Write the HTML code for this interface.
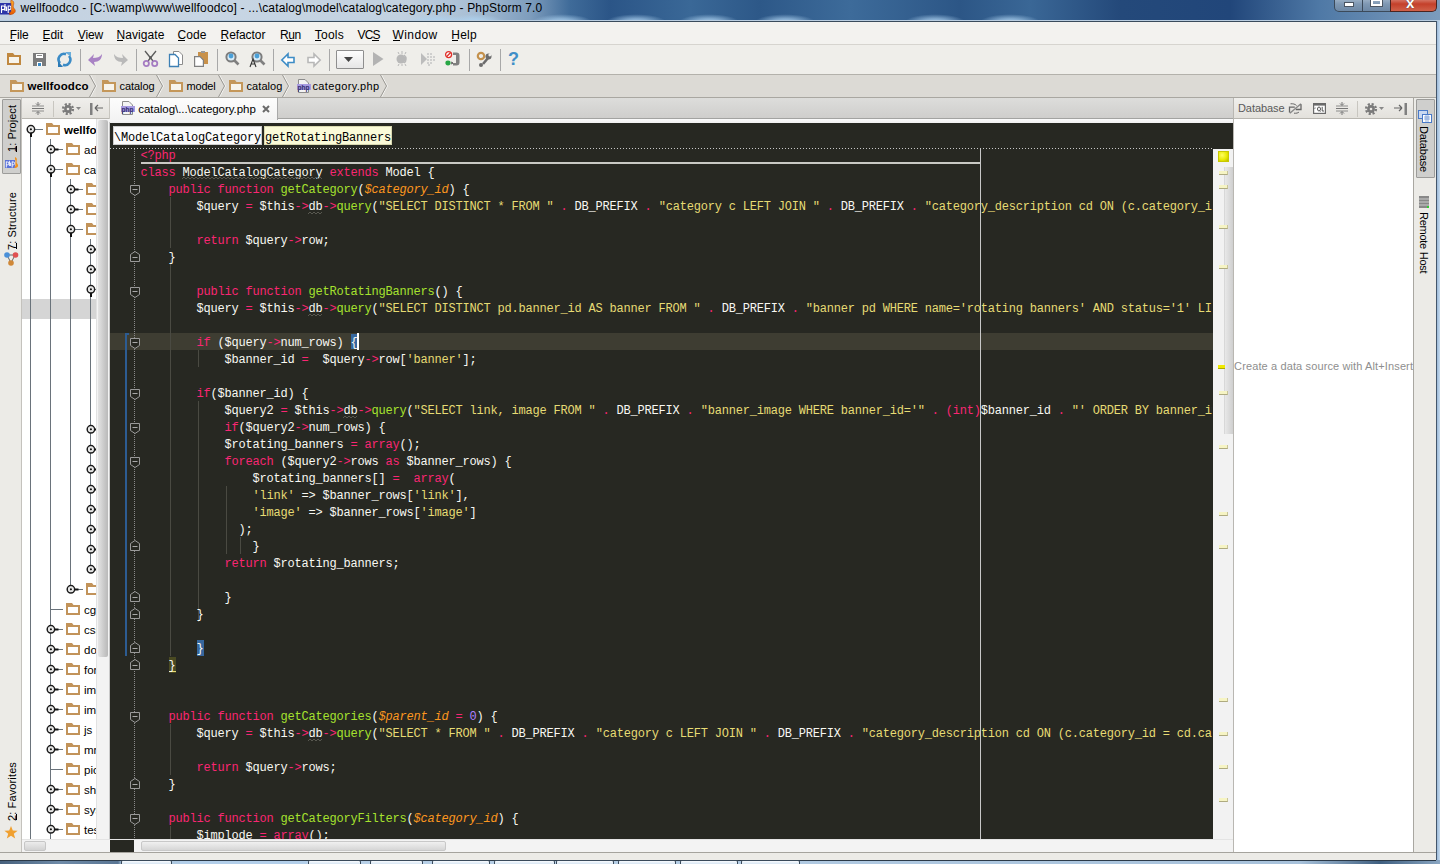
<!DOCTYPE html><html><head><meta charset="utf-8"><style>
*{margin:0;padding:0;box-sizing:border-box}
html,body{width:1440px;height:864px;overflow:hidden;background:#ecebe7;font-family:"Liberation Sans",sans-serif}
.a{position:absolute}
svg.a{overflow:visible}
.t12{font-size:12px;white-space:nowrap;color:#000;line-height:14px}
.code{font-family:"Liberation Mono",monospace;font-size:12px;letter-spacing:-0.2px;line-height:17px;white-space:pre;color:#f8f8f2}
.k{color:#f92672}.f{color:#a6e22e}.s{color:#e6db74}.p{color:#fd971f;font-style:italic}.n{color:#ae81ff}
u{text-decoration:none;border-bottom:1px solid #000}
.vt{transform-origin:0 0;white-space:nowrap;font-size:12px;color:#000;line-height:14px}
</style></head><body><div class="a" style="left:0px;top:0px;width:1440px;height:21px;background:linear-gradient(90deg,#c3d1e0 0px,#c8d6e4 200px,#c2d1e0 400px,#a9bfd5 470px,#7e9dbd 530px,#3f6b99 570px,#2b5587 610px,#3a6897 690px,#2d5888 760px,#3d6b9a 850px,#2c5686 960px,#3a6796 1030px,#24497a 1120px,#21467a 1230px,#4f79a6 1320px,#7c9cbd 1440px)"></div>
<div class="a" style="left:406px;top:9px;width:60px;height:13px;background:radial-gradient(ellipse 50% 60% at 50% 100%,rgba(175,212,242,0.95) 0%,rgba(175,212,242,0.6) 45%,rgba(175,212,242,0) 100%)"></div>
<div class="a" style="left:445px;top:9px;width:60px;height:13px;background:radial-gradient(ellipse 50% 60% at 50% 100%,rgba(175,212,242,0.95) 0%,rgba(175,212,242,0.6) 45%,rgba(175,212,242,0) 100%)"></div>
<div class="a" style="left:532px;top:9px;width:60px;height:13px;background:radial-gradient(ellipse 50% 60% at 50% 100%,rgba(175,212,242,0.95) 0%,rgba(175,212,242,0.6) 45%,rgba(175,212,242,0) 100%)"></div>
<div class="a" style="left:606px;top:9px;width:60px;height:13px;background:radial-gradient(ellipse 50% 60% at 50% 100%,rgba(175,212,242,0.95) 0%,rgba(175,212,242,0.6) 45%,rgba(175,212,242,0) 100%)"></div>
<div class="a" style="left:679px;top:9px;width:60px;height:13px;background:radial-gradient(ellipse 50% 60% at 50% 100%,rgba(175,212,242,0.95) 0%,rgba(175,212,242,0.6) 45%,rgba(175,212,242,0) 100%)"></div>
<div class="a" style="left:755px;top:9px;width:60px;height:13px;background:radial-gradient(ellipse 50% 60% at 50% 100%,rgba(175,212,242,0.95) 0%,rgba(175,212,242,0.6) 45%,rgba(175,212,242,0) 100%)"></div>
<div class="a" style="left:905px;top:9px;width:60px;height:13px;background:radial-gradient(ellipse 50% 60% at 50% 100%,rgba(175,212,242,0.95) 0%,rgba(175,212,242,0.6) 45%,rgba(175,212,242,0) 100%)"></div>
<div class="a" style="left:980px;top:9px;width:60px;height:13px;background:radial-gradient(ellipse 50% 60% at 50% 100%,rgba(175,212,242,0.95) 0%,rgba(175,212,242,0.6) 45%,rgba(175,212,242,0) 100%)"></div>
<div class="a" style="left:0px;top:20px;width:1440px;height:1px;background:#b9cde0"></div>
<div class="a" style="left:0px;top:21px;width:1440px;height:1px;background:#3a4b5c"></div>
<svg class="a" style="left:0px;top:0px;" width="17" height="16" viewBox="0 0 17 16"><defs><linearGradient id="fl" x1="0" y1="0" x2="0" y2="1"><stop offset="0" stop-color="#ffb030"/><stop offset="1" stop-color="#e85800"/></linearGradient></defs><rect x="0" y="3" width="11" height="11.5" fill="#2c35a8"/><path d="M1.5 5.5 V13 M1.5 6 H3.2 A1.6 1.8 0 0 1 3.2 9.6 H1.5 M5 4 V11 M5 7 H6.5 V11 M8.2 5.5 V13 M8.2 6 H9.6 A1.4 1.8 0 0 1 9.6 9.6 H8.2" fill="none" stroke="#fff" stroke-width="1.1"/><path d="M11 0 C17 2,11 6,14.5 9 C16.5 11,15 14.5,9.5 14.6 L9.5 12.6 C12.5 12,11 9.5,11.5 7.5 C12 4.5,10 3,11 0Z" fill="url(#fl)" stroke="#b04000" stroke-width="0.5"/></svg>
<div class="a t12" style="left:20.5px;top:1px;font-size:12px;font-weight:normal;color:#000;letter-spacing:0.157px;">wellfoodco - [C:\wamp\www\wellfoodco] - ...\catalog\model\catalog\category.php - PhpStorm 7.0</div>
<div class="a" style="left:1334px;top:-3px;width:29px;height:15px;border:1px solid #3b4a5a;border-top:none;border-radius:0 0 0 5px;background:linear-gradient(#a9bccf,#7f98b3 50%,#6d88a5)"></div>
<div class="a" style="left:1363px;top:-3px;width:27px;height:15px;border-bottom:1px solid #3b4a5a;background:linear-gradient(#a9bccf,#7f98b3 50%,#6d88a5)"></div>
<div class="a" style="left:1390px;top:-3px;width:47px;height:15px;border:1px solid #4a2420;border-top:none;border-radius:0 0 5px 0;background:linear-gradient(#e0978a,#c4402a 50%,#d0614a)"></div>
<div class="a" style="left:1344px;top:2px;width:10px;height:5px;background:#fff;border:1px solid #4b5562"></div>
<div class="a" style="left:1371px;top:-1px;width:11px;height:7px;border:2px solid #fff;outline:1px solid #4b5562"></div>
<div class="a" style="left:1406px;top:-6px;font:bold 15px 'Liberation Sans';color:#fff;text-shadow:0 0 1px #333">x</div>
<div class="a" style="left:1436px;top:21px;width:4px;height:843px;background:linear-gradient(90deg,#44566b 0 1px,#9cb9d8 1px,#c6dbef)"></div>
<div class="a" style="left:0px;top:22px;width:1436px;height:22px;background:#f3f2ef"></div>
<div class="a" style="left:0px;top:44px;width:1436px;height:1px;background:#d6d4cf"></div>
<div class="a t12" style="left:9.8px;top:28px;font-size:12px;font-weight:normal;color:#000;letter-spacing:-0.161px;">File</div>
<div class="a" style="left:10px;top:40px;width:5px;height:1px;background:#000"></div>
<div class="a t12" style="left:42.5px;top:28px;font-size:12px;font-weight:normal;color:#000;letter-spacing:-0.047px;">Edit</div>
<div class="a" style="left:43px;top:40px;width:5px;height:1px;background:#000"></div>
<div class="a t12" style="left:77.8px;top:28px;font-size:12px;font-weight:normal;color:#000;letter-spacing:-0.149px;">View</div>
<div class="a" style="left:78px;top:40px;width:6px;height:1px;background:#000"></div>
<div class="a t12" style="left:116.5px;top:28px;font-size:12px;font-weight:normal;color:#000;letter-spacing:0.078px;">Navigate</div>
<div class="a" style="left:117px;top:40px;width:6px;height:1px;background:#000"></div>
<div class="a t12" style="left:177.5px;top:28px;font-size:12px;font-weight:normal;color:#000;letter-spacing:0.078px;">Code</div>
<div class="a" style="left:178px;top:40px;width:7px;height:1px;background:#000"></div>
<div class="a t12" style="left:220.6px;top:28px;font-size:12px;font-weight:normal;color:#000;letter-spacing:-0.082px;">Refactor</div>
<div class="a" style="left:221px;top:40px;width:5px;height:1px;background:#000"></div>
<div class="a t12" style="left:280.0px;top:28px;font-size:12px;font-weight:normal;color:#000;letter-spacing:-0.405px;">Run</div>
<div class="a" style="left:287px;top:40px;width:7px;height:1px;background:#000"></div>
<div class="a t12" style="left:314.7px;top:28px;font-size:12px;font-weight:normal;color:#000;letter-spacing:0.277px;">Tools</div>
<div class="a" style="left:315px;top:40px;width:6px;height:1px;background:#000"></div>
<div class="a t12" style="left:357.5px;top:28px;font-size:12px;font-weight:normal;color:#000;letter-spacing:-0.829px;">VCS</div>
<div class="a" style="left:372px;top:40px;width:7px;height:1px;background:#000"></div>
<div class="a t12" style="left:392.5px;top:28px;font-size:12px;font-weight:normal;color:#000;letter-spacing:0.419px;">Window</div>
<div class="a" style="left:393px;top:40px;width:7px;height:1px;background:#000"></div>
<div class="a t12" style="left:451.2px;top:28px;font-size:12px;font-weight:normal;color:#000;letter-spacing:0.278px;">Help</div>
<div class="a" style="left:452px;top:40px;width:6px;height:1px;background:#000"></div>
<div class="a" style="left:0px;top:45px;width:1436px;height:29px;background:#efeeea"></div>
<div class="a" style="left:0px;top:74px;width:1436px;height:1px;background:#b3b1ab"></div>
<div class="a" style="left:80px;top:49px;width:1px;height:22px;background:#a8a8a8"></div>
<div class="a" style="left:136px;top:49px;width:1px;height:22px;background:#a8a8a8"></div>
<div class="a" style="left:217px;top:49px;width:1px;height:22px;background:#a8a8a8"></div>
<div class="a" style="left:273px;top:49px;width:1px;height:22px;background:#a8a8a8"></div>
<div class="a" style="left:329px;top:49px;width:1px;height:22px;background:#a8a8a8"></div>
<div class="a" style="left:469px;top:49px;width:1px;height:22px;background:#a8a8a8"></div>
<div class="a" style="left:500px;top:49px;width:1px;height:22px;background:#a8a8a8"></div>
<svg class="a" style="left:7px;top:53px;" width="14" height="12" viewBox="0 0 14 12"><path d="M0 0 H6 L7.5 2 H14 V12 H0 Z" fill="#c08840"/><rect x="2" y="4" width="10" height="6" fill="#f7f4ec"/></svg>
<svg class="a" style="left:33px;top:53px;" width="13" height="13" viewBox="0 0 13 13"><rect x="0" y="0" width="13" height="13" fill="#7b7b7b"/><rect x="3" y="1" width="7" height="4" fill="#fff"/><rect x="4" y="2" width="5" height="1" fill="#888"/><rect x="4" y="9" width="5" height="4" fill="#fff"/><rect x="5" y="10" width="3" height="3" fill="#3a8ac4"/></svg>
<svg class="a" style="left:57px;top:52px;" width="15" height="15" viewBox="0 0 15 15"><path d="M3 11 A5.5 5.5 0 0 1 9 2.2" fill="none" stroke="#3b8bc6" stroke-width="2.6"/><path d="M12 4 A5.5 5.5 0 0 1 6 12.8" fill="none" stroke="#3b8bc6" stroke-width="2.6"/><path d="M8 0 L14 0 L14 5Z" fill="#6aaedb"/><path d="M1 15 L1 9 L6 15Z" fill="#2c7ab5"/></svg>
<svg class="a" style="left:88px;top:53px;" width="15" height="14" viewBox="0 0 15 14"><path d="M0 7 L6 1 L5 5 C9 5,12 4,14 1 C14 6,11 9,6 9 L7 13Z" fill="#a882c4"/></svg>
<svg class="a" style="left:113px;top:53px;" width="15" height="14" viewBox="0 0 15 14"><path d="M15 7 L9 1 L10 5 C6 5,3 4,1 1 C1 6,4 9,9 9 L8 13Z" fill="#b9b9b9"/></svg>
<svg class="a" style="left:143px;top:51px;" width="15" height="16" viewBox="0 0 15 16"><path d="M2 0 L10 10 M13 0 L5 10" stroke="#5b5b5b" stroke-width="1.3"/><rect x="6.5" y="5.5" width="2" height="2" fill="none" stroke="#5b5b5b" stroke-width="0.8"/><circle cx="3.3" cy="12.5" r="2.6" fill="none" stroke="#a57cc2" stroke-width="1.8"/><circle cx="11.7" cy="12.5" r="2.6" fill="none" stroke="#a57cc2" stroke-width="1.8"/></svg>
<svg class="a" style="left:169px;top:51px;" width="14" height="16" viewBox="0 0 14 16"><path d="M4.5 0.5 H10 L13.5 4 V13.5 H4.5Z" fill="#fff" stroke="#8c8c8c"/><path d="M0.5 3.5 H6 L9.5 7 V15.5 H0.5Z" fill="#fff" stroke="#3d80b5" stroke-width="1.3"/></svg>
<svg class="a" style="left:194px;top:51px;" width="14" height="16" viewBox="0 0 14 16"><rect x="4" y="1" width="10" height="12" fill="#c8914a"/><rect x="7" y="0" width="4" height="2" fill="#999"/><path d="M0.6 5.6 H6 L9.4 9 V15.4 H0.6Z" fill="#fff" stroke="#808080" stroke-width="1.2"/></svg>
<svg class="a" style="left:225px;top:51px;" width="15" height="16" viewBox="0 0 15 16"><circle cx="6" cy="6" r="4.6" fill="#d8ecf8" stroke="#7d7d7d" stroke-width="2"/><circle cx="6" cy="5" r="2.4" fill="#4aa0d8"/><path d="M9 9 L13.5 13.5" stroke="#808080" stroke-width="2.6"/></svg>
<svg class="a" style="left:249px;top:51px;" width="17" height="17" viewBox="0 0 17 17"><circle cx="8" cy="6" r="4.6" fill="#d8ecf8" stroke="#7d7d7d" stroke-width="2"/><circle cx="8" cy="5" r="2.4" fill="#4aa0d8"/><path d="M11 9 L15.5 13.5" stroke="#808080" stroke-width="2.6"/><path d="M1 16 L4 8 L7 16 M2.2 13 H5.8" stroke="#333" stroke-width="1.1" fill="none"/></svg>
<svg class="a" style="left:281px;top:53px;" width="14" height="14" viewBox="0 0 14 14"><path d="M0.8 7 L7 1 V4.5 H13 V9.5 H7 V13Z" fill="#fff" stroke="#3d8cc6" stroke-width="1.6"/></svg>
<svg class="a" style="left:307px;top:53px;" width="14" height="14" viewBox="0 0 14 14"><path d="M13.2 7 L7 1 V4.5 H1 V9.5 H7 V13Z" fill="#fff" stroke="#b8b8b8" stroke-width="1.6"/></svg>
<div class="a" style="left:336px;top:50px;width:28px;height:19px;background:linear-gradient(#fdfdfd,#e6e6e6);border:1px solid #8e8e8e;border-radius:1px"></div>
<svg class="a" style="left:344px;top:57px;" width="10" height="6" viewBox="0 0 10 6"><path d="M0 0 H9 L4.5 5Z" fill="#444"/></svg>
<svg class="a" style="left:373px;top:52px;" width="11" height="14" viewBox="0 0 11 14"><path d="M0 0 L10.5 7 L0 14Z" fill="#b3b3b3"/></svg>
<svg class="a" style="left:395px;top:51px;" width="14" height="15" viewBox="0 0 14 15"><circle cx="6" cy="8" r="4.5" fill="#b8b8b8"/><path d="M9 4 A5 5 0 0 1 9 12" fill="none" stroke="#b8b8b8" stroke-width="1.5"/><path d="M3 1 L4 3 M7 0 V3 M11 1 L10 3 M3 15 L4 13 M7 15 V13 M11 15 L10 13" stroke="#b8b8b8" stroke-width="1"/><rect x="9" y="7" width="2" height="2" fill="#b8b8b8"/></svg>
<svg class="a" style="left:421px;top:52px;" width="14" height="14" viewBox="0 0 14 14"><path d="M0 1 L6 7 L0 13Z" fill="#bcbcbc"/><g fill="#c4c4c4"><circle cx="7" cy="2" r="1"/><circle cx="10" cy="2" r="1"/><circle cx="13" cy="5" r="1"/><circle cx="7" cy="5" r="1"/><circle cx="10" cy="5" r="1"/><circle cx="7" cy="8" r="1"/><circle cx="10" cy="8" r="1"/><circle cx="13" cy="8" r="1"/><circle cx="7" cy="11" r="1"/><circle cx="10" cy="11" r="1"/><circle cx="8" cy="13" r="1"/></g></svg>
<svg class="a" style="left:445px;top:51px;" width="15" height="16" viewBox="0 0 15 16"><circle cx="3.6" cy="3.6" r="3" fill="#fff" stroke="#e0302a" stroke-width="1.3"/><path d="M1.5 5.7 L5.7 1.5" stroke="#e0302a" stroke-width="1.3"/><path d="M8 1.5 H11.5 A3 3 0 0 1 14.5 4.5 V11.5 A3 3 0 0 1 11.5 14.5 H8 V12 H11 V4 H8Z" fill="#808080"/><ellipse cx="3" cy="12" rx="2.6" ry="2.4" fill="#28a745"/><path d="M6 11 L8 12 L6 13" stroke="#555" fill="none"/></svg>
<svg class="a" style="left:477px;top:52px;" width="15" height="15" viewBox="0 0 15 15"><circle cx="4" cy="4" r="3.2" fill="none" stroke="#c4914c" stroke-width="2.2"/><path d="M6 12 L11 6" stroke="#6c6c6c" stroke-width="2.6"/><circle cx="11.5" cy="4.5" r="3" fill="#6c6c6c"/><circle cx="12.8" cy="3" r="1.4" fill="#efeeea"/><circle cx="4" cy="13" r="2" fill="#6c6c6c"/></svg>
<div class="a" style="left:508px;top:49px;font:bold 18px 'Liberation Sans';color:#3f8fc8;line-height:20px">?</div>
<div class="a" style="left:0px;top:75px;width:1436px;height:22px;background:#dcdad5"></div>
<div class="a" style="left:0px;top:97px;width:1436px;height:1px;background:#a9a7a1"></div>
<div class="a" style="left:0px;top:75px;width:96px;height:22px;background:#dfddd8"></div>
<svg class="a" style="left:90px;top:75px;" width="8" height="22" viewBox="0 0 8 22"><path d="M0.5 0 L6.5 11 L0.5 22" fill="none" stroke="#f4f4f2" stroke-width="1"/><path d="M-0.5 0 L5.5 11 L-0.5 22" fill="none" stroke="#9a9893" stroke-width="1"/></svg>
<svg class="a" style="left:157px;top:75px;" width="8" height="22" viewBox="0 0 8 22"><path d="M0.5 0 L6.5 11 L0.5 22" fill="none" stroke="#f4f4f2" stroke-width="1"/><path d="M-0.5 0 L5.5 11 L-0.5 22" fill="none" stroke="#9a9893" stroke-width="1"/></svg>
<svg class="a" style="left:219px;top:75px;" width="8" height="22" viewBox="0 0 8 22"><path d="M0.5 0 L6.5 11 L0.5 22" fill="none" stroke="#f4f4f2" stroke-width="1"/><path d="M-0.5 0 L5.5 11 L-0.5 22" fill="none" stroke="#9a9893" stroke-width="1"/></svg>
<svg class="a" style="left:283px;top:75px;" width="8" height="22" viewBox="0 0 8 22"><path d="M0.5 0 L6.5 11 L0.5 22" fill="none" stroke="#f4f4f2" stroke-width="1"/><path d="M-0.5 0 L5.5 11 L-0.5 22" fill="none" stroke="#9a9893" stroke-width="1"/></svg>
<svg class="a" style="left:381px;top:75px;" width="8" height="22" viewBox="0 0 8 22"><path d="M0.5 0 L6.5 11 L0.5 22" fill="none" stroke="#f4f4f2" stroke-width="1"/><path d="M-0.5 0 L5.5 11 L-0.5 22" fill="none" stroke="#9a9893" stroke-width="1"/></svg>
<svg class="a" style="left:10px;top:80px;" width="14" height="12" viewBox="0 0 14 12"><path d="M0 0 H6 L7.5 2 H14 V12 H0 Z" fill="#c4975a"/><rect x="2" y="4" width="10" height="6" fill="#f7f4ec"/></svg>
<div class="a t12" style="left:27.5px;top:79px;font-size:11.5px;font-weight:bold;color:#000;letter-spacing:0.094px;">wellfoodco</div>
<svg class="a" style="left:102px;top:80px;" width="14" height="12" viewBox="0 0 14 12"><path d="M0 0 H6 L7.5 2 H14 V12 H0 Z" fill="#c4975a"/><rect x="2" y="4" width="10" height="6" fill="#f7f4ec"/></svg>
<div class="a t12" style="left:119.5px;top:79px;font-size:11px;font-weight:normal;color:#000;letter-spacing:-0.069px;">catalog</div>
<svg class="a" style="left:169px;top:80px;" width="14" height="12" viewBox="0 0 14 12"><path d="M0 0 H6 L7.5 2 H14 V12 H0 Z" fill="#c4975a"/><rect x="2" y="4" width="10" height="6" fill="#f7f4ec"/></svg>
<div class="a t12" style="left:186.5px;top:79px;font-size:11px;font-weight:normal;color:#000;letter-spacing:-0.194px;">model</div>
<svg class="a" style="left:229px;top:80px;" width="14" height="12" viewBox="0 0 14 12"><path d="M0 0 H6 L7.5 2 H14 V12 H0 Z" fill="#c4975a"/><rect x="2" y="4" width="10" height="6" fill="#f7f4ec"/></svg>
<div class="a t12" style="left:246.5px;top:79px;font-size:11px;font-weight:normal;color:#000;letter-spacing:0.074px;">catalog</div>
<svg class="a" style="left:297px;top:79px;" width="14" height="14" viewBox="0 0 14 14"><path d="M1.5 0.5 H8 L11.5 4 V13.5 H1.5Z" fill="#f4f4f4" stroke="#8c8c8c"/><rect x="0" y="5" width="14" height="6" fill="#a79be0"/><text x="0.5" y="10.5" font-family="Liberation Sans" font-size="6.5" font-weight="bold" fill="#2c2a6a">php</text></svg>
<div class="a t12" style="left:312.5px;top:79px;font-size:11px;font-weight:normal;color:#000;letter-spacing:0.350px;">category.php</div>
<div class="a" style="left:0px;top:98px;width:22px;height:755px;background:#ecebe7"></div>
<div class="a" style="left:21px;top:98px;width:1px;height:755px;background:#c4c2bd"></div>
<div class="a" style="left:2px;top:99px;width:19px;height:75px;background:#cfcfcd;border:1px solid #9c9c9a;border-radius:1px"></div>
<div class="a t12" style="left:4.5px;top:152.0px;font-size:11px;font-weight:normal;color:#000;letter-spacing:0.053px;transform-origin:0 0;transform:rotate(-90deg);">1: Project</div>
<div class="a" style="left:16px;top:146px;width:1px;height:6px;background:#000"></div>
<svg class="a" style="left:5px;top:157px;" width="14" height="12" viewBox="0 0 14 12"><rect x="0" y="3" width="10" height="8" fill="#5a72d8"/><path d="M1.3 4.5 V10.5 M1.3 5 H2.6 A1.2 1.4 0 0 1 2.6 7.8 H1.3 M4.4 3.8 V9 M4.4 6 H5.6 V9 M7.2 4.5 V10.5 M7.2 5 H8.4 A1.2 1.4 0 0 1 8.4 7.8 H7.2" fill="none" stroke="#fff" stroke-width="0.9"/><path d="M10 0 C14 1.5,10 4.5,12.5 7 C14 9,12.5 11,9.5 11 L9.5 9.5 C11.5 9,10 7,10.5 5.5 C11 3.5,9.5 2,10 0Z" fill="#f0901c"/></svg>
<div class="a t12" style="left:4.5px;top:249.5px;font-size:11px;font-weight:normal;color:#000;letter-spacing:0.095px;transform-origin:0 0;transform:rotate(-90deg);">7: Structure</div>
<div class="a" style="left:16px;top:243px;width:1px;height:6px;background:#000"></div>
<svg class="a" style="left:4px;top:252px;" width="15" height="14" viewBox="0 0 15 14"><path d="M3 3 L7 11 L11 3Z" fill="none" stroke="#666" stroke-width="1"/><circle cx="3" cy="3" r="2.8" fill="#4a90d9"/><circle cx="11.5" cy="3" r="2.8" fill="#e05050"/><circle cx="7" cy="11" r="2.8" fill="#d08838"/></svg>
<div class="a t12" style="left:4.5px;top:820.5px;font-size:11px;font-weight:normal;color:#000;letter-spacing:0.128px;transform-origin:0 0;transform:rotate(-90deg);">2: Favorites</div>
<div class="a" style="left:16px;top:814px;width:1px;height:6px;background:#000"></div>
<svg class="a" style="left:4px;top:826px;" width="14" height="13" viewBox="0 0 14 13"><path d="M7 0 L8.8 4.6 L13.6 4.8 L9.8 7.8 L11.2 12.6 L7 9.8 L2.8 12.6 L4.2 7.8 L0.4 4.8 L5.2 4.6Z" fill="#f0a030"/></svg>
<div class="a" style="left:22px;top:98px;width:88px;height:21px;background:linear-gradient(#f0efec,#e3e1dc)"></div>
<div class="a" style="left:22px;top:118px;width:88px;height:1px;background:#b8b6b0"></div>
<div class="a" style="left:109px;top:98px;width:1px;height:22px;background:#c8c6c0"></div>
<svg class="a" style="left:32px;top:102px;" width="12" height="13" viewBox="0 0 12 13"><path d="M0 6.5 H12" stroke="#777" stroke-width="1"/><path d="M0 4 H12 M0 9 H12" stroke="#777" stroke-width="0.8"/><path d="M6 0 V3 M4 1.5 L6 3.5 L8 1.5 M6 13 V10 M4 11.5 L6 9.5 L8 11.5" stroke="#777" stroke-width="1" fill="none"/></svg>
<div class="a" style="left:53px;top:101px;width:1px;height:16px;background:#c8c6c0"></div>
<svg class="a" style="left:62px;top:103px;" width="12" height="12" viewBox="0 0 12 12"><circle cx="6" cy="6" r="4.9" fill="none" stroke="#7a7a7a" stroke-width="2.4" stroke-dasharray="2.1 1.75"/><circle cx="6" cy="6" r="3.9" fill="#7a7a7a"/><circle cx="6" cy="6" r="1.3" fill="#e9e7e2"/></svg>
<svg class="a" style="left:76px;top:107px;" width="5" height="3" viewBox="0 0 5 3"><path d="M0 0 H5 L2.5 3Z" fill="#888"/></svg>
<svg class="a" style="left:90px;top:103px;" width="13" height="12" viewBox="0 0 13 12"><rect x="0" y="0" width="2.5" height="12" fill="#808080"/><path d="M5 5 H13 M5 5 L8 2 M5 5 L8 8" stroke="#666" stroke-width="1.2" fill="none"/></svg>
<div class="a" style="left:22px;top:119px;width:74px;height:720px;background:#fff"></div>
<div class="a" style="left:96px;top:119px;width:14px;height:720px;background:#f3f3f3;border-left:1px solid #e2e2e2"></div>
<div class="a" style="left:98px;top:120px;width:10px;height:537px;background:linear-gradient(90deg,#e4e4e4,#c9c9c9 60%,#b9b9b9);border-radius:2px"></div>
<div class="a" style="left:22px;top:299px;width:74px;height:20px;background:#d5d5d5"></div>
<div class="a" style="left:30px;top:133px;width:1px;height:706px;background:#6a737b"></div>
<div class="a" style="left:50px;top:139px;width:1px;height:700px;background:#6a737b"></div>
<div class="a" style="left:70px;top:179px;width:1px;height:410px;background:#6a737b"></div>
<div class="a" style="left:90px;top:239px;width:1px;height:330px;background:#6a737b"></div>
<svg class="a" style="left:22px;top:119px;overflow:hidden" width="74" height="720"><rect x="13" y="10" width="8" height="1" fill="#6a737b"/><circle cx="8.9" cy="10.3" r="3.7" fill="#fff" stroke="#1c1c1c" stroke-width="1.5"/><circle cx="8.9" cy="10.3" r="2.2" fill="none" stroke="#d0d0d0" stroke-width="0.8"/><circle cx="8.9" cy="10.3" r="1.1" fill="#111"/><rect x="8" y="14" width="2" height="4" fill="#111"/><rect x="33" y="30" width="8" height="1" fill="#6a737b"/><circle cx="28.9" cy="30.3" r="3.7" fill="#fff" stroke="#1c1c1c" stroke-width="1.5"/><circle cx="28.9" cy="30.3" r="2.2" fill="none" stroke="#d0d0d0" stroke-width="0.8"/><circle cx="28.9" cy="30.3" r="1.1" fill="#111"/><rect x="32.5" y="29.5" width="4" height="2" fill="#111"/><rect x="33" y="50" width="8" height="1" fill="#6a737b"/><circle cx="28.9" cy="50.3" r="3.7" fill="#fff" stroke="#1c1c1c" stroke-width="1.5"/><circle cx="28.9" cy="50.3" r="2.2" fill="none" stroke="#d0d0d0" stroke-width="0.8"/><circle cx="28.9" cy="50.3" r="1.1" fill="#111"/><rect x="28" y="54" width="2" height="4" fill="#111"/><rect x="53" y="70" width="8" height="1" fill="#6a737b"/><circle cx="48.9" cy="70.3" r="3.7" fill="#fff" stroke="#1c1c1c" stroke-width="1.5"/><circle cx="48.9" cy="70.3" r="2.2" fill="none" stroke="#d0d0d0" stroke-width="0.8"/><circle cx="48.9" cy="70.3" r="1.1" fill="#111"/><rect x="52.5" y="69.5" width="4" height="2" fill="#111"/><rect x="53" y="90" width="8" height="1" fill="#6a737b"/><circle cx="48.9" cy="90.3" r="3.7" fill="#fff" stroke="#1c1c1c" stroke-width="1.5"/><circle cx="48.9" cy="90.3" r="2.2" fill="none" stroke="#d0d0d0" stroke-width="0.8"/><circle cx="48.9" cy="90.3" r="1.1" fill="#111"/><rect x="52.5" y="89.5" width="4" height="2" fill="#111"/><rect x="53" y="110" width="8" height="1" fill="#6a737b"/><circle cx="48.9" cy="110.3" r="3.7" fill="#fff" stroke="#1c1c1c" stroke-width="1.5"/><circle cx="48.9" cy="110.3" r="2.2" fill="none" stroke="#d0d0d0" stroke-width="0.8"/><circle cx="48.9" cy="110.3" r="1.1" fill="#111"/><rect x="48" y="114" width="2" height="4" fill="#111"/><rect x="73" y="130" width="8" height="1" fill="#6a737b"/><circle cx="68.9" cy="130.3" r="3.7" fill="#fff" stroke="#1c1c1c" stroke-width="1.5"/><circle cx="68.9" cy="130.3" r="2.2" fill="none" stroke="#d0d0d0" stroke-width="0.8"/><circle cx="68.9" cy="130.3" r="1.1" fill="#111"/><rect x="72.5" y="129.5" width="4" height="2" fill="#111"/><rect x="73" y="150" width="8" height="1" fill="#6a737b"/><circle cx="68.9" cy="150.3" r="3.7" fill="#fff" stroke="#1c1c1c" stroke-width="1.5"/><circle cx="68.9" cy="150.3" r="2.2" fill="none" stroke="#d0d0d0" stroke-width="0.8"/><circle cx="68.9" cy="150.3" r="1.1" fill="#111"/><rect x="72.5" y="149.5" width="4" height="2" fill="#111"/><rect x="73" y="170" width="8" height="1" fill="#6a737b"/><circle cx="68.9" cy="170.3" r="3.7" fill="#fff" stroke="#1c1c1c" stroke-width="1.5"/><circle cx="68.9" cy="170.3" r="2.2" fill="none" stroke="#d0d0d0" stroke-width="0.8"/><circle cx="68.9" cy="170.3" r="1.1" fill="#111"/><rect x="68" y="174" width="2" height="4" fill="#111"/><rect x="73" y="310" width="8" height="1" fill="#6a737b"/><circle cx="68.9" cy="310.3" r="3.7" fill="#fff" stroke="#1c1c1c" stroke-width="1.5"/><circle cx="68.9" cy="310.3" r="2.2" fill="none" stroke="#d0d0d0" stroke-width="0.8"/><circle cx="68.9" cy="310.3" r="1.1" fill="#111"/><rect x="72.5" y="309.5" width="4" height="2" fill="#111"/><rect x="73" y="330" width="8" height="1" fill="#6a737b"/><circle cx="68.9" cy="330.3" r="3.7" fill="#fff" stroke="#1c1c1c" stroke-width="1.5"/><circle cx="68.9" cy="330.3" r="2.2" fill="none" stroke="#d0d0d0" stroke-width="0.8"/><circle cx="68.9" cy="330.3" r="1.1" fill="#111"/><rect x="72.5" y="329.5" width="4" height="2" fill="#111"/><rect x="73" y="350" width="8" height="1" fill="#6a737b"/><circle cx="68.9" cy="350.3" r="3.7" fill="#fff" stroke="#1c1c1c" stroke-width="1.5"/><circle cx="68.9" cy="350.3" r="2.2" fill="none" stroke="#d0d0d0" stroke-width="0.8"/><circle cx="68.9" cy="350.3" r="1.1" fill="#111"/><rect x="72.5" y="349.5" width="4" height="2" fill="#111"/><rect x="73" y="370" width="8" height="1" fill="#6a737b"/><circle cx="68.9" cy="370.3" r="3.7" fill="#fff" stroke="#1c1c1c" stroke-width="1.5"/><circle cx="68.9" cy="370.3" r="2.2" fill="none" stroke="#d0d0d0" stroke-width="0.8"/><circle cx="68.9" cy="370.3" r="1.1" fill="#111"/><rect x="72.5" y="369.5" width="4" height="2" fill="#111"/><rect x="73" y="390" width="8" height="1" fill="#6a737b"/><circle cx="68.9" cy="390.3" r="3.7" fill="#fff" stroke="#1c1c1c" stroke-width="1.5"/><circle cx="68.9" cy="390.3" r="2.2" fill="none" stroke="#d0d0d0" stroke-width="0.8"/><circle cx="68.9" cy="390.3" r="1.1" fill="#111"/><rect x="72.5" y="389.5" width="4" height="2" fill="#111"/><rect x="73" y="410" width="8" height="1" fill="#6a737b"/><circle cx="68.9" cy="410.3" r="3.7" fill="#fff" stroke="#1c1c1c" stroke-width="1.5"/><circle cx="68.9" cy="410.3" r="2.2" fill="none" stroke="#d0d0d0" stroke-width="0.8"/><circle cx="68.9" cy="410.3" r="1.1" fill="#111"/><rect x="72.5" y="409.5" width="4" height="2" fill="#111"/><rect x="73" y="430" width="8" height="1" fill="#6a737b"/><circle cx="68.9" cy="430.3" r="3.7" fill="#fff" stroke="#1c1c1c" stroke-width="1.5"/><circle cx="68.9" cy="430.3" r="2.2" fill="none" stroke="#d0d0d0" stroke-width="0.8"/><circle cx="68.9" cy="430.3" r="1.1" fill="#111"/><rect x="72.5" y="429.5" width="4" height="2" fill="#111"/><rect x="73" y="450" width="8" height="1" fill="#6a737b"/><circle cx="68.9" cy="450.3" r="3.7" fill="#fff" stroke="#1c1c1c" stroke-width="1.5"/><circle cx="68.9" cy="450.3" r="2.2" fill="none" stroke="#d0d0d0" stroke-width="0.8"/><circle cx="68.9" cy="450.3" r="1.1" fill="#111"/><rect x="72.5" y="449.5" width="4" height="2" fill="#111"/><rect x="53" y="470" width="8" height="1" fill="#6a737b"/><circle cx="48.9" cy="470.3" r="3.7" fill="#fff" stroke="#1c1c1c" stroke-width="1.5"/><circle cx="48.9" cy="470.3" r="2.2" fill="none" stroke="#d0d0d0" stroke-width="0.8"/><circle cx="48.9" cy="470.3" r="1.1" fill="#111"/><rect x="52.5" y="469.5" width="4" height="2" fill="#111"/><rect x="28" y="490" width="13" height="1" fill="#6a737b"/><rect x="33" y="510" width="8" height="1" fill="#6a737b"/><circle cx="28.9" cy="510.3" r="3.7" fill="#fff" stroke="#1c1c1c" stroke-width="1.5"/><circle cx="28.9" cy="510.3" r="2.2" fill="none" stroke="#d0d0d0" stroke-width="0.8"/><circle cx="28.9" cy="510.3" r="1.1" fill="#111"/><rect x="32.5" y="509.5" width="4" height="2" fill="#111"/><rect x="33" y="530" width="8" height="1" fill="#6a737b"/><circle cx="28.9" cy="530.3" r="3.7" fill="#fff" stroke="#1c1c1c" stroke-width="1.5"/><circle cx="28.9" cy="530.3" r="2.2" fill="none" stroke="#d0d0d0" stroke-width="0.8"/><circle cx="28.9" cy="530.3" r="1.1" fill="#111"/><rect x="32.5" y="529.5" width="4" height="2" fill="#111"/><rect x="33" y="550" width="8" height="1" fill="#6a737b"/><circle cx="28.9" cy="550.3" r="3.7" fill="#fff" stroke="#1c1c1c" stroke-width="1.5"/><circle cx="28.9" cy="550.3" r="2.2" fill="none" stroke="#d0d0d0" stroke-width="0.8"/><circle cx="28.9" cy="550.3" r="1.1" fill="#111"/><rect x="32.5" y="549.5" width="4" height="2" fill="#111"/><rect x="33" y="570" width="8" height="1" fill="#6a737b"/><circle cx="28.9" cy="570.3" r="3.7" fill="#fff" stroke="#1c1c1c" stroke-width="1.5"/><circle cx="28.9" cy="570.3" r="2.2" fill="none" stroke="#d0d0d0" stroke-width="0.8"/><circle cx="28.9" cy="570.3" r="1.1" fill="#111"/><rect x="32.5" y="569.5" width="4" height="2" fill="#111"/><rect x="33" y="590" width="8" height="1" fill="#6a737b"/><circle cx="28.9" cy="590.3" r="3.7" fill="#fff" stroke="#1c1c1c" stroke-width="1.5"/><circle cx="28.9" cy="590.3" r="2.2" fill="none" stroke="#d0d0d0" stroke-width="0.8"/><circle cx="28.9" cy="590.3" r="1.1" fill="#111"/><rect x="32.5" y="589.5" width="4" height="2" fill="#111"/><rect x="33" y="610" width="8" height="1" fill="#6a737b"/><circle cx="28.9" cy="610.3" r="3.7" fill="#fff" stroke="#1c1c1c" stroke-width="1.5"/><circle cx="28.9" cy="610.3" r="2.2" fill="none" stroke="#d0d0d0" stroke-width="0.8"/><circle cx="28.9" cy="610.3" r="1.1" fill="#111"/><rect x="32.5" y="609.5" width="4" height="2" fill="#111"/><rect x="33" y="630" width="8" height="1" fill="#6a737b"/><circle cx="28.9" cy="630.3" r="3.7" fill="#fff" stroke="#1c1c1c" stroke-width="1.5"/><circle cx="28.9" cy="630.3" r="2.2" fill="none" stroke="#d0d0d0" stroke-width="0.8"/><circle cx="28.9" cy="630.3" r="1.1" fill="#111"/><rect x="32.5" y="629.5" width="4" height="2" fill="#111"/><rect x="28" y="650" width="13" height="1" fill="#6a737b"/><rect x="33" y="670" width="8" height="1" fill="#6a737b"/><circle cx="28.9" cy="670.3" r="3.7" fill="#fff" stroke="#1c1c1c" stroke-width="1.5"/><circle cx="28.9" cy="670.3" r="2.2" fill="none" stroke="#d0d0d0" stroke-width="0.8"/><circle cx="28.9" cy="670.3" r="1.1" fill="#111"/><rect x="32.5" y="669.5" width="4" height="2" fill="#111"/><rect x="33" y="690" width="8" height="1" fill="#6a737b"/><circle cx="28.9" cy="690.3" r="3.7" fill="#fff" stroke="#1c1c1c" stroke-width="1.5"/><circle cx="28.9" cy="690.3" r="2.2" fill="none" stroke="#d0d0d0" stroke-width="0.8"/><circle cx="28.9" cy="690.3" r="1.1" fill="#111"/><rect x="32.5" y="689.5" width="4" height="2" fill="#111"/><rect x="33" y="710" width="8" height="1" fill="#6a737b"/><circle cx="28.9" cy="710.3" r="3.7" fill="#fff" stroke="#1c1c1c" stroke-width="1.5"/><circle cx="28.9" cy="710.3" r="2.2" fill="none" stroke="#d0d0d0" stroke-width="0.8"/><circle cx="28.9" cy="710.3" r="1.1" fill="#111"/><rect x="32.5" y="709.5" width="4" height="2" fill="#111"/></svg>
<div class="a" style="left:22px;top:119px;width:74px;height:720px;overflow:hidden"><svg class="a" style="left:24px;top:4px" width="14" height="12"><path d="M0 0 H6 L7.5 2 H14 V12 H0 Z" fill="#c2935a"/><rect x="2" y="4" width="10" height="6" fill="#fff"/></svg><div class="a t12" style="left:42px;top:4px;font-size:11.5px;font-weight:bold">wellfoodco</div><svg class="a" style="left:44px;top:24px" width="14" height="12"><path d="M0 0 H6 L7.5 2 H14 V12 H0 Z" fill="#c2935a"/><rect x="2" y="4" width="10" height="6" fill="#fff"/></svg><div class="a t12" style="left:62px;top:24px;font-size:11.5px;">admin</div><svg class="a" style="left:44px;top:44px" width="14" height="12"><path d="M0 0 H6 L7.5 2 H14 V12 H0 Z" fill="#c2935a"/><rect x="2" y="4" width="10" height="6" fill="#fff"/></svg><div class="a t12" style="left:62px;top:44px;font-size:11.5px;">catalog</div><svg class="a" style="left:64px;top:64px" width="14" height="12"><path d="M0 0 H6 L7.5 2 H14 V12 H0 Z" fill="#c2935a"/><rect x="2" y="4" width="10" height="6" fill="#fff"/></svg><div class="a t12" style="left:82px;top:64px;font-size:11.5px;">c</div><svg class="a" style="left:64px;top:84px" width="14" height="12"><path d="M0 0 H6 L7.5 2 H14 V12 H0 Z" fill="#c2935a"/><rect x="2" y="4" width="10" height="6" fill="#fff"/></svg><div class="a t12" style="left:82px;top:84px;font-size:11.5px;">c</div><svg class="a" style="left:64px;top:104px" width="14" height="12"><path d="M0 0 H6 L7.5 2 H14 V12 H0 Z" fill="#c2935a"/><rect x="2" y="4" width="10" height="6" fill="#fff"/></svg><div class="a t12" style="left:82px;top:104px;font-size:11.5px;">c</div><svg class="a" style="left:64px;top:464px" width="14" height="12"><path d="M0 0 H6 L7.5 2 H14 V12 H0 Z" fill="#c2935a"/><rect x="2" y="4" width="10" height="6" fill="#fff"/></svg><div class="a t12" style="left:82px;top:464px;font-size:11.5px;">c</div><svg class="a" style="left:44px;top:484px" width="14" height="12"><path d="M0 0 H6 L7.5 2 H14 V12 H0 Z" fill="#c2935a"/><rect x="2" y="4" width="10" height="6" fill="#fff"/></svg><div class="a t12" style="left:62px;top:484px;font-size:11.5px;">cgi-bin</div><svg class="a" style="left:44px;top:504px" width="14" height="12"><path d="M0 0 H6 L7.5 2 H14 V12 H0 Z" fill="#c2935a"/><rect x="2" y="4" width="10" height="6" fill="#fff"/></svg><div class="a t12" style="left:62px;top:504px;font-size:11.5px;">css</div><svg class="a" style="left:44px;top:524px" width="14" height="12"><path d="M0 0 H6 L7.5 2 H14 V12 H0 Z" fill="#c2935a"/><rect x="2" y="4" width="10" height="6" fill="#fff"/></svg><div class="a t12" style="left:62px;top:524px;font-size:11.5px;">doc</div><svg class="a" style="left:44px;top:544px" width="14" height="12"><path d="M0 0 H6 L7.5 2 H14 V12 H0 Z" fill="#c2935a"/><rect x="2" y="4" width="10" height="6" fill="#fff"/></svg><div class="a t12" style="left:62px;top:544px;font-size:11.5px;">fonts</div><svg class="a" style="left:44px;top:564px" width="14" height="12"><path d="M0 0 H6 L7.5 2 H14 V12 H0 Z" fill="#c2935a"/><rect x="2" y="4" width="10" height="6" fill="#fff"/></svg><div class="a t12" style="left:62px;top:564px;font-size:11.5px;">image</div><svg class="a" style="left:44px;top:584px" width="14" height="12"><path d="M0 0 H6 L7.5 2 H14 V12 H0 Z" fill="#c2935a"/><rect x="2" y="4" width="10" height="6" fill="#fff"/></svg><div class="a t12" style="left:62px;top:584px;font-size:11.5px;">img</div><svg class="a" style="left:44px;top:604px" width="14" height="12"><path d="M0 0 H6 L7.5 2 H14 V12 H0 Z" fill="#c2935a"/><rect x="2" y="4" width="10" height="6" fill="#fff"/></svg><div class="a t12" style="left:62px;top:604px;font-size:11.5px;">js</div><svg class="a" style="left:44px;top:624px" width="14" height="12"><path d="M0 0 H6 L7.5 2 H14 V12 H0 Z" fill="#c2935a"/><rect x="2" y="4" width="10" height="6" fill="#fff"/></svg><div class="a t12" style="left:62px;top:624px;font-size:11.5px;">mrvn</div><svg class="a" style="left:44px;top:644px" width="14" height="12"><path d="M0 0 H6 L7.5 2 H14 V12 H0 Z" fill="#c2935a"/><rect x="2" y="4" width="10" height="6" fill="#fff"/></svg><div class="a t12" style="left:62px;top:644px;font-size:11.5px;">pics</div><svg class="a" style="left:44px;top:664px" width="14" height="12"><path d="M0 0 H6 L7.5 2 H14 V12 H0 Z" fill="#c2935a"/><rect x="2" y="4" width="10" height="6" fill="#fff"/></svg><div class="a t12" style="left:62px;top:664px;font-size:11.5px;">shop</div><svg class="a" style="left:44px;top:684px" width="14" height="12"><path d="M0 0 H6 L7.5 2 H14 V12 H0 Z" fill="#c2935a"/><rect x="2" y="4" width="10" height="6" fill="#fff"/></svg><div class="a t12" style="left:62px;top:684px;font-size:11.5px;">system</div><svg class="a" style="left:44px;top:704px" width="14" height="12"><path d="M0 0 H6 L7.5 2 H14 V12 H0 Z" fill="#c2935a"/><rect x="2" y="4" width="10" height="6" fill="#fff"/></svg><div class="a t12" style="left:62px;top:704px;font-size:11.5px;">test</div></div>
<div class="a" style="left:22px;top:839px;width:88px;height:13px;background:#f3f3f3;border-top:1px solid #e4e4e4"></div>
<div class="a" style="left:24px;top:841px;width:22px;height:10px;background:linear-gradient(#ececec,#d2d2d2);border:1px solid #c6c6c6;border-radius:2px"></div>
<div class="a" style="left:110px;top:98px;width:1123px;height:20px;background:linear-gradient(#dddddb,#cfcecc)"></div>
<div class="a" style="left:110px;top:118px;width:1123px;height:1px;background:#a3a3a1"></div>
<div class="a" style="left:110px;top:119px;width:1123px;height:4px;background:linear-gradient(#fafafa,#f0f0f0)"></div>
<div class="a" style="left:110px;top:98px;width:168px;height:22px;background:linear-gradient(#fdfdfd,#f3f3f3);border-right:1px solid #a9a9a9"></div>
<svg class="a" style="left:121px;top:101px;" width="14" height="14" viewBox="0 0 14 14"><path d="M1.5 0.5 H8 L11.5 4 V13.5 H1.5Z" fill="#f4f4f4" stroke="#8c8c8c"/><rect x="0" y="5" width="14" height="6" fill="#a79be0"/><text x="0.5" y="10.5" font-family="Liberation Sans" font-size="6.5" font-weight="bold" fill="#2c2a6a">php</text></svg>
<div class="a t12" style="left:138.25px;top:102px;font-size:11.5px;font-weight:normal;color:#000;letter-spacing:-0.050px;">catalog\...\category.php</div>
<svg class="a" style="left:262px;top:105px;" width="8" height="8" viewBox="0 0 8 8"><path d="M1 1 L7 7 M7 1 L1 7" stroke="#6a6a6a" stroke-width="2"/></svg>
<div class="a" style="left:109px;top:122px;width:1px;height:717px;background:#c9c9c9"></div>
<div class="a" style="left:110px;top:123px;width:1123px;height:716px;background:#272822"></div>
<div class="a" style="left:113px;top:126px;width:149px;height:19px;background:#fbfbfb;border:1px solid #cfcfcf"></div>
<div class="a" style="left:264px;top:126px;width:128px;height:19px;background:#fafad8;border:1px solid #d8d8b0"></div>
<div class="a code" style="left:114px;top:130px;color:#000;line-height:17px">\ModelCatalogCategory</div>
<div class="a code" style="left:265px;top:130px;color:#000;line-height:17px">getRotatingBanners</div>
<div class="a" style="left:110px;top:148px;width:1103px;height:1px;background:repeating-linear-gradient(90deg,#c8c8c8 0 1px,transparent 1px 3px)"></div>
<div class="a" style="left:110px;top:333px;width:1103px;height:17px;background:#3e3d32"></div>
<div class="a" style="left:134px;top:149px;width:1px;height:690px;background:repeating-linear-gradient(#8a8a8a 0 1px,transparent 1px 2px)"></div>
<div class="a" style="left:125px;top:333px;width:2px;height:323px;background:#2d5c92"></div>
<div class="a" style="left:125px;top:333px;width:4px;height:2px;background:#2d5c92"></div>
<div class="a" style="left:141px;top:162px;width:839px;height:2px;background:#c9c9c4"></div>
<div class="a" style="left:980px;top:148px;width:1px;height:691px;background:#c8c8c8"></div>
<div class="a" style="left:170px;top:197px;width:1px;height:51px;background:#4a4a42"></div>
<div class="a" style="left:170px;top:260px;width:1px;height:396px;background:#4a4a42"></div>
<div class="a" style="left:170px;top:724px;width:1px;height:51px;background:#4a4a42"></div>
<div class="a" style="left:170px;top:826px;width:1px;height:13px;background:#4a4a42"></div>
<div class="a" style="left:198px;top:350px;width:1px;height:17px;background:#4a4a42"></div>
<div class="a" style="left:198px;top:401px;width:1px;height:221px;background:#4a4a42"></div>
<div class="a" style="left:226px;top:486px;width:1px;height:68px;background:#4a4a42"></div>
<div class="a" style="left:240px;top:537px;width:1px;height:17px;background:#4a4a42"></div>
<svg class="a" style="left:130px;top:183px;" width="10" height="13" viewBox="0 0 10 13"><path d="M0.5 2.5 H9.5 V9.5 L5 12.5 L0.5 9.5 Z" fill="#272822" stroke="#9a9a9a" stroke-width="1"/><path d="M2.5 6.5 H7.5" stroke="#a8a8a8" stroke-width="1"/></svg>
<svg class="a" style="left:130px;top:285px;" width="10" height="13" viewBox="0 0 10 13"><path d="M0.5 2.5 H9.5 V9.5 L5 12.5 L0.5 9.5 Z" fill="#272822" stroke="#9a9a9a" stroke-width="1"/><path d="M2.5 6.5 H7.5" stroke="#a8a8a8" stroke-width="1"/></svg>
<svg class="a" style="left:130px;top:336px;" width="10" height="13" viewBox="0 0 10 13"><path d="M0.5 2.5 H9.5 V9.5 L5 12.5 L0.5 9.5 Z" fill="#272822" stroke="#9a9a9a" stroke-width="1"/><path d="M2.5 6.5 H7.5" stroke="#a8a8a8" stroke-width="1"/></svg>
<svg class="a" style="left:130px;top:387px;" width="10" height="13" viewBox="0 0 10 13"><path d="M0.5 2.5 H9.5 V9.5 L5 12.5 L0.5 9.5 Z" fill="#272822" stroke="#9a9a9a" stroke-width="1"/><path d="M2.5 6.5 H7.5" stroke="#a8a8a8" stroke-width="1"/></svg>
<svg class="a" style="left:130px;top:421px;" width="10" height="13" viewBox="0 0 10 13"><path d="M0.5 2.5 H9.5 V9.5 L5 12.5 L0.5 9.5 Z" fill="#272822" stroke="#9a9a9a" stroke-width="1"/><path d="M2.5 6.5 H7.5" stroke="#a8a8a8" stroke-width="1"/></svg>
<svg class="a" style="left:130px;top:455px;" width="10" height="13" viewBox="0 0 10 13"><path d="M0.5 2.5 H9.5 V9.5 L5 12.5 L0.5 9.5 Z" fill="#272822" stroke="#9a9a9a" stroke-width="1"/><path d="M2.5 6.5 H7.5" stroke="#a8a8a8" stroke-width="1"/></svg>
<svg class="a" style="left:130px;top:710px;" width="10" height="13" viewBox="0 0 10 13"><path d="M0.5 2.5 H9.5 V9.5 L5 12.5 L0.5 9.5 Z" fill="#272822" stroke="#9a9a9a" stroke-width="1"/><path d="M2.5 6.5 H7.5" stroke="#a8a8a8" stroke-width="1"/></svg>
<svg class="a" style="left:130px;top:812px;" width="10" height="13" viewBox="0 0 10 13"><path d="M0.5 2.5 H9.5 V9.5 L5 12.5 L0.5 9.5 Z" fill="#272822" stroke="#9a9a9a" stroke-width="1"/><path d="M2.5 6.5 H7.5" stroke="#a8a8a8" stroke-width="1"/></svg>
<svg class="a" style="left:130px;top:251px;" width="10" height="13" viewBox="0 0 10 13"><path d="M0.5 10.5 H9.5 V3.5 L5 0.5 L0.5 3.5 Z" fill="#272822" stroke="#9a9a9a" stroke-width="1"/><path d="M2.5 6.5 H7.5" stroke="#a8a8a8" stroke-width="1"/></svg>
<svg class="a" style="left:130px;top:540px;" width="10" height="13" viewBox="0 0 10 13"><path d="M0.5 10.5 H9.5 V3.5 L5 0.5 L0.5 3.5 Z" fill="#272822" stroke="#9a9a9a" stroke-width="1"/><path d="M2.5 6.5 H7.5" stroke="#a8a8a8" stroke-width="1"/></svg>
<svg class="a" style="left:130px;top:591px;" width="10" height="13" viewBox="0 0 10 13"><path d="M0.5 10.5 H9.5 V3.5 L5 0.5 L0.5 3.5 Z" fill="#272822" stroke="#9a9a9a" stroke-width="1"/><path d="M2.5 6.5 H7.5" stroke="#a8a8a8" stroke-width="1"/></svg>
<svg class="a" style="left:130px;top:608px;" width="10" height="13" viewBox="0 0 10 13"><path d="M0.5 10.5 H9.5 V3.5 L5 0.5 L0.5 3.5 Z" fill="#272822" stroke="#9a9a9a" stroke-width="1"/><path d="M2.5 6.5 H7.5" stroke="#a8a8a8" stroke-width="1"/></svg>
<svg class="a" style="left:130px;top:642px;" width="10" height="13" viewBox="0 0 10 13"><path d="M0.5 10.5 H9.5 V3.5 L5 0.5 L0.5 3.5 Z" fill="#272822" stroke="#9a9a9a" stroke-width="1"/><path d="M2.5 6.5 H7.5" stroke="#a8a8a8" stroke-width="1"/></svg>
<svg class="a" style="left:130px;top:659px;" width="10" height="13" viewBox="0 0 10 13"><path d="M0.5 10.5 H9.5 V3.5 L5 0.5 L0.5 3.5 Z" fill="#272822" stroke="#9a9a9a" stroke-width="1"/><path d="M2.5 6.5 H7.5" stroke="#a8a8a8" stroke-width="1"/></svg>
<svg class="a" style="left:130px;top:778px;" width="10" height="13" viewBox="0 0 10 13"><path d="M0.5 10.5 H9.5 V3.5 L5 0.5 L0.5 3.5 Z" fill="#272822" stroke="#9a9a9a" stroke-width="1"/><path d="M2.5 6.5 H7.5" stroke="#a8a8a8" stroke-width="1"/></svg>
<div class="a" style="left:351px;top:334px;width:7px;height:15px;background:#36679e"></div>
<div class="a" style="left:357px;top:333px;width:2px;height:17px;background:#ffffff"></div>
<div class="a" style="left:197px;top:640px;width:7px;height:16px;background:#36679e"></div>
<div class="a" style="left:169px;top:657px;width:7px;height:16px;background:#4a4a22"></div>
<div class="a" style="left:169px;top:671px;width:7px;height:1px;background:#e6db74"></div>
<div class="a code" style="left:140.4px;top:148px;width:1072px;height:691px;overflow:hidden"><span class="k">&lt;?</span><span class="k">php</span>
<span class="k">class</span> ModelCatalogCategory <span class="k">extends</span> Model {
    <span class="k">public</span> <span class="k">function</span> <span class="f">getCategory</span>(<span class="p">$</span><span class="p">category_id</span>) {
        $query <span class="k">=</span> $this<span class="k">-&gt;</span>db<span class="k">-&gt;</span><span class="f">query</span>(<span class="s">"SELECT DISTINCT * FROM "</span> <span class="k">.</span> DB_PREFIX <span class="k">.</span> <span class="s">"category c LEFT JOIN "</span> <span class="k">.</span> DB_PREFIX <span class="k">.</span> <span class="s">"category_description cd ON (c.category_id = cd.category_id)</span>

        <span class="k">return</span> $query<span class="k">-&gt;</span>row;
    }

        <span class="k">public</span> <span class="k">function</span> <span class="f">getRotatingBanners</span>() {
        $query <span class="k">=</span> $this<span class="k">-&gt;</span>db<span class="k">-&gt;</span><span class="f">query</span>(<span class="s">"SELECT DISTINCT pd.banner_id AS banner FROM "</span> <span class="k">.</span> DB_PREFIX <span class="k">.</span> <span class="s">"banner pd WHERE name='rotating banners' AND status='1' LIMIT 1"</span>);

        <span class="k">if</span> ($query<span class="k">-&gt;</span>num_rows) {
            $banner_id <span class="k">=</span>  $query<span class="k">-&gt;</span>row[<span class="s">'banner'</span>];

        <span class="k">if</span>($banner_id) {
            $query2 <span class="k">=</span> $this<span class="k">-&gt;</span>db<span class="k">-&gt;</span><span class="f">query</span>(<span class="s">"SELECT link, image FROM "</span> <span class="k">.</span> DB_PREFIX <span class="k">.</span> <span class="s">"banner_image WHERE banner_id='"</span> <span class="k">.</span> <span class="k">(</span><span class="k">int</span><span class="k">)</span>$banner_id <span class="k">.</span> <span class="s">"' ORDER BY banner_image_id"</span>);
            <span class="k">if</span>($query2<span class="k">-&gt;</span>num_rows) {
            $rotating_banners <span class="k">=</span> <span class="k">array</span>();
            <span class="k">foreach</span> ($query2<span class="k">-&gt;</span>rows <span class="k">as</span> $banner_rows) {
                $rotating_banners[] <span class="k">=</span>  <span class="k">array</span>(
                <span class="s">'link'</span> =&gt; $banner_rows[<span class="s">'link'</span>],
                <span class="s">'image'</span> =&gt; $banner_rows[<span class="s">'image'</span>]
              );
                }
            <span class="k">return</span> $rotating_banners;

            }
        }

        }
    }


    <span class="k">public</span> <span class="k">function</span> <span class="f">getCategories</span>(<span class="p">$</span><span class="p">parent_id</span> <span class="k">=</span> <span class="n">0</span>) {
        $query <span class="k">=</span> $this<span class="k">-&gt;</span>db<span class="k">-&gt;</span><span class="f">query</span>(<span class="s">"SELECT * FROM "</span> <span class="k">.</span> DB_PREFIX <span class="k">.</span> <span class="s">"category c LEFT JOIN "</span> <span class="k">.</span> DB_PREFIX <span class="k">.</span> <span class="s">"category_description cd ON (c.category_id = cd.category_id)</span>

        <span class="k">return</span> $query<span class="k">-&gt;</span>rows;
    }

    <span class="k">public</span> <span class="k">function</span> <span class="f">getCategoryFilters</span>(<span class="p">$</span><span class="p">category_id</span>) {
        $implode <span class="k">=</span> <span class="k">array</span>();</div>
<svg class="a" style="left:182px;top:177px;" width="140" height="3" viewBox="0 0 140 3"><polyline points="0,2 2,0 4,2 6,0 8,2 10,0 12,2 14,0 16,2 18,0 20,2 22,0 24,2 26,0 28,2 30,0 32,2 34,0 36,2 38,0 40,2 42,0 44,2 46,0 48,2 50,0 52,2 54,0 56,2 58,0 60,2 62,0 64,2 66,0 68,2 70,0 72,2 74,0 76,2 78,0 80,2 82,0 84,2 86,0 88,2 90,0 92,2 94,0 96,2 98,0 100,2 102,0 104,2 106,0 108,2 110,0 112,2 114,0 116,2 118,0 120,2 122,0 124,2 126,0 128,2 130,0 132,2 134,0 136,2 138,0 140,2" fill="none" stroke="#5e5e56" stroke-width="0.9"/></svg>
<svg class="a" style="left:308px;top:212px;" width="14" height="3" viewBox="0 0 14 3"><polyline points="0,2 2,0 4,2 6,0 8,2 10,0 12,2 14,0" fill="none" stroke="#5e5e56" stroke-width="0.9"/></svg>
<svg class="a" style="left:308px;top:314px;" width="14" height="3" viewBox="0 0 14 3"><polyline points="0,2 2,0 4,2 6,0 8,2 10,0 12,2 14,0" fill="none" stroke="#5e5e56" stroke-width="0.9"/></svg>
<svg class="a" style="left:343px;top:416px;" width="14" height="3" viewBox="0 0 14 3"><polyline points="0,2 2,0 4,2 6,0 8,2 10,0 12,2 14,0" fill="none" stroke="#5e5e56" stroke-width="0.9"/></svg>
<svg class="a" style="left:308px;top:739px;" width="14" height="3" viewBox="0 0 14 3"><polyline points="0,2 2,0 4,2 6,0 8,2 10,0 12,2 14,0" fill="none" stroke="#5e5e56" stroke-width="0.9"/></svg>
<div class="a" style="left:1213px;top:149px;width:20px;height:690px;background:#f2f2f2"></div>
<div class="a" style="left:1224px;top:167px;width:9px;height:267px;background:linear-gradient(90deg,#e8e8e8,#cfcfcf);border-left:1px solid #d8d8d8"></div>
<div class="a" style="left:1218px;top:151px;width:11px;height:11px;background:radial-gradient(circle at 35% 35%,#ffff60,#e8e800 60%,#b8b800);border:1px solid #c8c800"></div>
<div class="a" style="left:1219px;top:171px;width:9px;height:4px;background:#f6f4c4;border-bottom:1px solid #aeaa80;border-right:1px solid #c8c498"></div>
<div class="a" style="left:1219px;top:185px;width:9px;height:4px;background:#f6f4c4;border-bottom:1px solid #aeaa80;border-right:1px solid #c8c498"></div>
<div class="a" style="left:1219px;top:225px;width:9px;height:4px;background:#f6f4c4;border-bottom:1px solid #aeaa80;border-right:1px solid #c8c498"></div>
<div class="a" style="left:1219px;top:265px;width:9px;height:4px;background:#f6f4c4;border-bottom:1px solid #aeaa80;border-right:1px solid #c8c498"></div>
<div class="a" style="left:1219px;top:391px;width:9px;height:4px;background:#f6f4c4;border-bottom:1px solid #aeaa80;border-right:1px solid #c8c498"></div>
<div class="a" style="left:1219px;top:445px;width:9px;height:4px;background:#f6f4c4;border-bottom:1px solid #aeaa80;border-right:1px solid #c8c498"></div>
<div class="a" style="left:1219px;top:512px;width:9px;height:4px;background:#f6f4c4;border-bottom:1px solid #aeaa80;border-right:1px solid #c8c498"></div>
<div class="a" style="left:1219px;top:545px;width:9px;height:4px;background:#f6f4c4;border-bottom:1px solid #aeaa80;border-right:1px solid #c8c498"></div>
<div class="a" style="left:1219px;top:698px;width:9px;height:4px;background:#f6f4c4;border-bottom:1px solid #aeaa80;border-right:1px solid #c8c498"></div>
<div class="a" style="left:1219px;top:732px;width:9px;height:4px;background:#f6f4c4;border-bottom:1px solid #aeaa80;border-right:1px solid #c8c498"></div>
<div class="a" style="left:1219px;top:765px;width:9px;height:4px;background:#f6f4c4;border-bottom:1px solid #aeaa80;border-right:1px solid #c8c498"></div>
<div class="a" style="left:1219px;top:798px;width:9px;height:4px;background:#f6f4c4;border-bottom:1px solid #aeaa80;border-right:1px solid #c8c498"></div>
<div class="a" style="left:1218px;top:365px;width:7px;height:4px;background:#f0ea00;border-bottom:1px solid #b0a800"></div>
<div class="a" style="left:110px;top:839px;width:1123px;height:13px;background:#f3f3f3;border-top:1px solid #e4e4e4"></div>
<div class="a" style="left:110px;top:840px;width:24px;height:12px;background:#272822"></div>
<div class="a" style="left:141px;top:841px;width:305px;height:10px;background:linear-gradient(#f0f0f0,#d6d6d6);border:1px solid #c8c8c8;border-radius:2px"></div>
<div class="a" style="left:1233px;top:98px;width:180px;height:20px;background:linear-gradient(#f0efec,#e3e1dc)"></div>
<div class="a" style="left:1233px;top:98px;width:1px;height:755px;background:#b9b7b2"></div>
<div class="a" style="left:1233px;top:118px;width:180px;height:1px;background:#b8b6b0"></div>
<div class="a t12" style="left:1238.0px;top:101px;font-size:11px;font-weight:normal;color:#5a5a5a;letter-spacing:-0.074px;">Database</div>
<svg class="a" style="left:1289px;top:103px;" width="13" height="11" viewBox="0 0 13 11"><path d="M0.8 10.2 L12 0.8" stroke="#8a8a8a" stroke-width="1.5"/><path d="M6.8 6.5 H12 V1.3 M5.8 4.2 H0.5 V9.6" stroke="#666" stroke-width="1.3" fill="none"/><path d="M1.5 0.8 C4 0.6 6 1 7.5 2.5 M5 10.2 C7.5 10.4 9 10 10 9" stroke="#666" stroke-width="1" fill="none"/></svg>
<svg class="a" style="left:1313px;top:103px;" width="13" height="11" viewBox="0 0 13 11"><rect x="0.6" y="0.6" width="11.8" height="9.8" fill="#fff" stroke="#6a6a6a" stroke-width="1.2"/><rect x="0.6" y="0.6" width="11.8" height="2" fill="#6a6a6a"/><path d="M2.2 4.6 L1.8 5.8" stroke="#555" stroke-width="0.9"/><ellipse cx="6" cy="6" rx="1.5" ry="2" fill="none" stroke="#555" stroke-width="1"/><path d="M6.5 7.5 L7.5 8.5 M9.2 3.8 V8 H11" stroke="#555" stroke-width="1" fill="none"/></svg>
<svg class="a" style="left:1336px;top:102px;" width="12" height="13" viewBox="0 0 12 13"><path d="M0 6.5 H12" stroke="#777" stroke-width="1"/><path d="M0 4 H12 M0 9 H12" stroke="#777" stroke-width="0.8"/><path d="M6 0 V3 M4 1.5 L6 3.5 L8 1.5 M6 13 V10 M4 11.5 L6 9.5 L8 11.5" stroke="#777" stroke-width="1" fill="none"/></svg>
<div class="a" style="left:1357px;top:101px;width:1px;height:16px;background:#c8c6c0"></div>
<svg class="a" style="left:1365px;top:103px;" width="12" height="12" viewBox="0 0 12 12"><circle cx="6" cy="6" r="4.9" fill="none" stroke="#7a7a7a" stroke-width="2.4" stroke-dasharray="2.1 1.75"/><circle cx="6" cy="6" r="3.9" fill="#7a7a7a"/><circle cx="6" cy="6" r="1.3" fill="#e9e7e2"/></svg>
<svg class="a" style="left:1379px;top:107px;" width="5" height="3" viewBox="0 0 5 3"><path d="M0 0 H5 L2.5 3Z" fill="#888"/></svg>
<svg class="a" style="left:1394px;top:103px;" width="13" height="12" viewBox="0 0 13 12"><rect x="10.5" y="0" width="2.5" height="12" fill="#808080"/><path d="M0 5 H8 M8 5 L5 2 M8 5 L5 8" stroke="#666" stroke-width="1.2" fill="none"/></svg>
<div class="a" style="left:1234px;top:119px;width:179px;height:733px;background:#fff"></div>
<div class="a t12" style="left:1234.1px;top:359px;font-size:11px;font-weight:normal;color:#8e8e8e;letter-spacing:0.123px;">Create a data source with Alt+Insert</div>
<div class="a" style="left:1413px;top:98px;width:23px;height:755px;background:#ecebe7"></div>
<div class="a" style="left:1413px;top:98px;width:1px;height:755px;background:#a9a7a1"></div>
<div class="a" style="left:1416px;top:99px;width:19px;height:79px;background:#cfcfcd;border:1px solid #9c9c9a;border-radius:1px"></div>
<svg class="a" style="left:1418px;top:110px;" width="14" height="13" viewBox="0 0 14 13"><rect x="0.5" y="0.5" width="9" height="8" fill="#c9d8f0" stroke="#4a7ac8"/><rect x="4.5" y="4.5" width="9" height="8" fill="#fff" stroke="#4a7ac8"/><path d="M6 7 H12 M6 9 H12 M8 5 V12 M10 5 V12" stroke="#4a7ac8" stroke-width="0.6"/></svg>
<div class="a t12" style="left:1431px;top:126.3px;font-size:11px;font-weight:normal;color:#000;letter-spacing:-0.137px;transform-origin:0 0;transform:rotate(90deg);">Database</div>
<svg class="a" style="left:1419px;top:196px;" width="11" height="12" viewBox="0 0 11 12"><rect x="0" y="0" width="10" height="12" fill="#888"/><path d="M0 3 H10 M0 6 H10 M0 9 H10" stroke="#ddd" stroke-width="0.8"/><rect x="8" y="10" width="2" height="2" fill="#3c3"/></svg>
<div class="a t12" style="left:1431px;top:212.1px;font-size:11px;font-weight:normal;color:#000;letter-spacing:-0.255px;transform-origin:0 0;transform:rotate(90deg);">Remote Host</div>
<div class="a" style="left:0px;top:852px;width:1436px;height:1px;background:#a5a39d"></div>
<div class="a" style="left:0px;top:853px;width:1436px;height:7px;background:#ecebe7"></div>
<div class="a" style="left:0px;top:860px;width:1440px;height:4px;background:linear-gradient(90deg,#46607c,#6f8ba8 60px,#5a7694 118px,#a9c4dd 122px,#b9d1e8 300px,#a8c2db 1300px,#3f5f80 1380px,#8aa6c2)"></div>
<div class="a" style="left:0px;top:860px;width:1436px;height:1px;background:#2c3a48"></div>
<div class="a" style="left:180px;top:861px;width:127px;height:3px;background:#b3cfea"></div>
<div class="a" style="left:121px;top:860px;width:51px;height:4px;background:linear-gradient(#f8fbfe,#d8e6f3);border:1px solid #3a4a5a;border-bottom:none;border-radius:2px 2px 0 0"></div>
<div class="a" style="left:308px;top:860px;width:53px;height:4px;background:linear-gradient(#f8fbfe,#d8e6f3);border:1px solid #3a4a5a;border-bottom:none;border-radius:2px 2px 0 0"></div>
<div class="a" style="left:370px;top:860px;width:53px;height:4px;background:linear-gradient(#f8fbfe,#d8e6f3);border:1px solid #3a4a5a;border-bottom:none;border-radius:2px 2px 0 0"></div>
<div class="a" style="left:432px;top:860px;width:58px;height:4px;background:linear-gradient(#f8fbfe,#d8e6f3);border:1px solid #3a4a5a;border-bottom:none;border-radius:2px 2px 0 0"></div>
<div class="a" style="left:494px;top:860px;width:61px;height:4px;background:linear-gradient(#f8fbfe,#d8e6f3);border:1px solid #3a4a5a;border-bottom:none;border-radius:2px 2px 0 0"></div>
<div class="a" style="left:556px;top:860px;width:58px;height:4px;background:linear-gradient(#f8fbfe,#d8e6f3);border:1px solid #3a4a5a;border-bottom:none;border-radius:2px 2px 0 0"></div>
<div class="a" style="left:618px;top:860px;width:58px;height:4px;background:linear-gradient(#f8fbfe,#d8e6f3);border:1px solid #3a4a5a;border-bottom:none;border-radius:2px 2px 0 0"></div>
<div class="a" style="left:680px;top:860px;width:58px;height:4px;background:linear-gradient(#f8fbfe,#d8e6f3);border:1px solid #3a4a5a;border-bottom:none;border-radius:2px 2px 0 0"></div>
<div class="a" style="left:741px;top:860px;width:59px;height:4px;background:linear-gradient(#f8fbfe,#d8e6f3);border:1px solid #3a4a5a;border-bottom:none;border-radius:2px 2px 0 0"></div></body></html>
